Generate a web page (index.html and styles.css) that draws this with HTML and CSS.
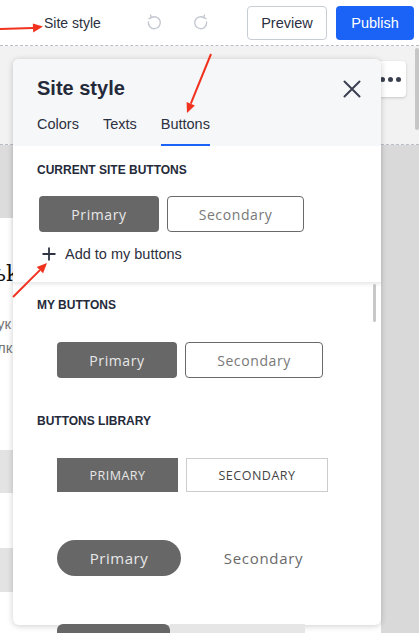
FILE: index.html
```html
<!DOCTYPE html>
<html>
<head>
<meta charset="utf-8">
<link rel="stylesheet" href="styles.css">
</head>
<body>
<div class="topbar">
  <span class="tb-title">Site style</span>
  <span class="tb-icon undo">
    <svg width="16" height="17" viewBox="0 0 16 17"><path d="M5.2 3.6 A6 6 0 1 1 2.4 8" fill="none" stroke="#c3c7d0" stroke-width="1.4" stroke-linecap="round"/><path d="M4.6 1.2 L5.4 3.7 L3 4.7" fill="none" stroke="#c3c7d0" stroke-width="1.4" stroke-linecap="round" stroke-linejoin="round"/></svg>
  </span>
  <span class="tb-icon redo">
    <svg width="16" height="17" viewBox="0 0 16 17"><g transform="translate(16,0) scale(-1,1)"><path d="M5.2 3.6 A6 6 0 1 1 2.4 8" fill="none" stroke="#c3c7d0" stroke-width="1.4" stroke-linecap="round"/><path d="M4.6 1.2 L5.4 3.7 L3 4.7" fill="none" stroke="#c3c7d0" stroke-width="1.4" stroke-linecap="round" stroke-linejoin="round"/></g></svg>
  </span>
  <button class="btn-preview">Preview</button>
  <button class="btn-publish">Publish</button>
</div>

<div class="workspace">
  <div class="site-header"></div>
  <div class="site-body">
    <div class="page">
      <div class="hero"></div>
      <div class="text-block">
        <div class="frag-big">ьk</div>
        <div class="frag">ук</div>
        <div class="frag">лк</div>
      </div>
      <div class="gray-block"></div>
      <div class="gap-block"></div>
      <div class="gray-block tall"></div>
    </div>
    <div class="outside"></div>
  </div>
  <div class="vthumb"></div>

  <div class="more-btn"><span></span><span></span><span></span></div>

  <div class="panel">
    <div class="panel-head">
      <div class="head-row">
        <div class="panel-title">Site style</div>
        <svg class="close" width="18" height="18" viewBox="0 0 18 18"><path d="M1.5 1.5 L16.5 16.5 M16.5 1.5 L1.5 16.5" stroke="#3b4050" stroke-width="2" stroke-linecap="round"/></svg>
      </div>
      <div class="tabs">
        <div class="tab">Colors</div>
        <div class="tab">Texts</div>
        <div class="tab active">Buttons</div>
      </div>
    </div>

    <div class="current">
      <div class="sec-title">CURRENT SITE BUTTONS</div>
      <div class="btn-row first">
        <div class="sb primary w120">Primary</div>
        <div class="sb secondary w137">Secondary</div>
      </div>
      <div class="add-row">
        <svg width="14" height="14" viewBox="0 0 14 14"><path d="M7 0.5 V13.5 M0.5 7 H13.5" stroke="#2f3444" stroke-width="1.8"/></svg>
        <span>Add to my buttons</span>
      </div>
    </div>

    <div class="scroll">
      <div class="sthumb"></div>
      <div class="sec-title">MY BUTTONS</div>
      <div class="btn-row indent">
        <div class="sb primary w120">Primary</div>
        <div class="sb secondary w138">Secondary</div>
      </div>
      <div class="sec-title lib">BUTTONS LIBRARY</div>
      <div class="btn-row indent lib-row">
        <div class="sb primary square w121 upper">PRIMARY</div>
        <div class="sb secondary square light w142 upper">SECONDARY</div>
      </div>
      <div class="btn-row indent pill-row">
        <div class="sb primary pill w124">Primary</div>
        <div class="sb ghost w149">Secondary</div>
      </div>
      <div class="btn-row indent next-row">
        <div class="sb primary w113 peek"></div>
        <div class="sb peek-light w135"></div>
      </div>
    </div>
  </div>
</div>

<svg class="arrows" width="419" height="633" viewBox="0 0 419 633">
  <line x1="0" y1="29" x2="33" y2="27.9" stroke="#f0321e" stroke-width="2"/>
  <polygon points="43,26.5 33.2,32.4 32.8,23.4" fill="#f0321e"/>
  <line x1="211" y1="54" x2="190.8" y2="103.7" stroke="#f0321e" stroke-width="2"/>
  <polygon points="187,113 194.9,105.4 186.6,102" fill="#f0321e"/>
  <line x1="13" y1="297" x2="39.9" y2="270.1" stroke="#f0321e" stroke-width="2"/>
  <polygon points="47,263 43.1,273.3 36.7,266.9" fill="#f0321e"/>
</svg>
</body>
</html>
```

FILE: styles.css
```css
* { box-sizing: border-box; }
html, body { margin: 0; padding: 0; }
body {
  position: relative;
  width: 419px;
  height: 633px;
  overflow: hidden;
  font-family: "Liberation Sans", Arial, sans-serif;
  color: #2c3040;
  background: #fff;
}

.topbar {
  height: 46px;
  display: flex;
  align-items: center;
  padding: 0 5px 0 44px;
  border-bottom: 1px dashed #b9bdc6;
  background: #fff;
}
.tb-title { font-size: 14px; color: #2c3040; }
.tb-icon { display: flex; width: 16px; height: 17px; }
.tb-icon.undo { margin-left: 45px; }
.tb-icon.redo { margin-left: 31px; }
.btn-preview, .btn-publish {
  height: 34px;
  font-family: "Liberation Sans", Arial, sans-serif;
  font-size: 14.5px;
  border-radius: 4px;
  padding: 0;
}
.btn-preview {
  margin-left: auto;
  width: 80px;
  background: #fff;
  border: 1px solid #c8ccd4;
  color: #2c3040;
}
.btn-publish {
  margin-left: 9px;
  width: 78px;
  background: #1b63f6;
  border: none;
  color: #fff;
}

.workspace {
  position: relative;
  height: 587px;
  overflow: hidden;
}
.site-header {
  height: 99px;
  background: #f2f2f2;
  border-bottom: 1px dashed #b9bdc6;
}
.site-body { display: flex; height: 488px; }
.page { width: 381px; background: #fff; }
.outside { flex: 1; background: #d9d9d9; }
.hero { height: 73px; background: #dcdcdc; }
.text-block { height: 232px; padding-top: 44px; }
.frag-big { font-family: "DejaVu Serif", serif; font-size: 22px; color: #111; margin-left: -6px; line-height: 24px; height: 50px; }
.frag { font-size: 15px; color: #777; line-height: 24px; margin-left: -3px; }
.gray-block { height: 43px; background: #e3e3e3; }
.gray-block.tall { height: 44px; }
.gap-block { height: 55px; }

.vthumb {
  position: absolute;
  right: 0;
  top: 2px;
  width: 4px;
  height: 82px;
  background: #c6c6c6;
  border-radius: 2px;
}

.more-btn {
  position: absolute;
  left: 374px;
  top: 15px;
  width: 32px;
  height: 36px;
  background: #fff;
  border-radius: 4px;
  box-shadow: 0 1px 3px rgba(0,0,0,0.18);
  display: flex;
  align-items: center;
  justify-content: flex-end;
  gap: 3px;
  padding-right: 5px;
}
.more-btn span { width: 5px; height: 5px; border-radius: 50%; background: #3b4050; }

.panel {
  position: absolute;
  left: 13px;
  top: 13px;
  width: 368px;
  height: 566px;
  background: #fff;
  border-radius: 6px;
  box-shadow: 0 1px 6px rgba(0,0,0,0.2);
  display: flex;
  flex-direction: column;
}
.panel-head {
  background: #f6f7f9;
  border-radius: 6px 6px 0 0;
  padding: 17px 20px 0 24px;
}
.head-row { display: flex; align-items: center; justify-content: space-between; height: 24px; }
.panel-title { font-size: 20px; font-weight: bold; color: #252a3a; line-height: 24px; }
.close { margin-top: 1px; }
.tabs { display: flex; gap: 24px; margin-top: 15px; }
.tab {
  font-size: 14.5px;
  line-height: 18px;
  padding-bottom: 11px;
  border-bottom: 2px solid transparent;
  color: #2c3040;
}
.tab.active { border-bottom-color: #1b63f6; }

.current {
  position: relative;
  z-index: 1;
  padding: 17px 24px 19px 24px;
  box-shadow: 0 2px 3px rgba(0,0,0,0.07);
  border-bottom: 1px solid #ececec;
}
.sec-title {
  font-size: 12px;
  font-weight: bold;
  line-height: 14px;
  color: #252a3a;
}
.btn-row { display: flex; gap: 8px; }
.btn-row.first { margin-top: 19px; margin-left: 2px; }
.sb {
  height: 36px;
  border-radius: 4px;
  display: flex;
  align-items: center;
  justify-content: center;
  font-family: "Open Sans", sans-serif;
  font-size: 14px;
  letter-spacing: 0.6px;
}
.sb.primary { background: #676767; color: #e8e8e8; }
.sb.secondary { background: #fff; border: 1px solid #6a6a6a; color: #787878; }
.sb.square { border-radius: 0; height: 34px; }
.sb.light { border-color: #cccccc; color: #444; }
.sb.upper { font-size: 12.5px; letter-spacing: 0.5px; }
.sb.pill { border-radius: 18px; font-size: 15px; letter-spacing: 0.5px; }
.sb.ghost { color: #6a6a6a; font-size: 15px; letter-spacing: 0.7px; }
.w113 { width: 113px; } .w120 { width: 120px; } .w121 { width: 121px; }
.w124 { width: 124px; } .w135 { width: 135px; } .w137 { width: 137px; }
.w138 { width: 138px; } .w142 { width: 142px; } .w149 { width: 149px; }

.add-row {
  margin-top: 13px;
  margin-left: 5px;
  display: flex;
  align-items: center;
  gap: 9px;
  font-size: 14.5px;
  line-height: 18px;
  color: #2c3040;
}

.scroll {
  position: relative;
  flex: 1;
  padding: 15px 24px 0 24px;
}
.sthumb {
  position: absolute;
  right: 5px;
  top: 1px;
  width: 3px;
  height: 38px;
  border-radius: 2px;
  background: #c8c8c8;
}
.btn-row.indent { margin-left: 20px; margin-top: 30px; }
.sec-title.lib { margin-top: 36px; }
.btn-row.pill-row { margin-top: 48px; }
.btn-row.next-row { margin-top: 48px; gap: 0; }
.sb.peek { border-radius: 6px 6px 0 0; height: 10px; }
.sb.peek-light { background: #e6e6e6; height: 10px; border-radius: 0; }

.arrows {
  position: absolute;
  left: 0;
  top: 0;
  pointer-events: none;
  z-index: 5;
}
```
